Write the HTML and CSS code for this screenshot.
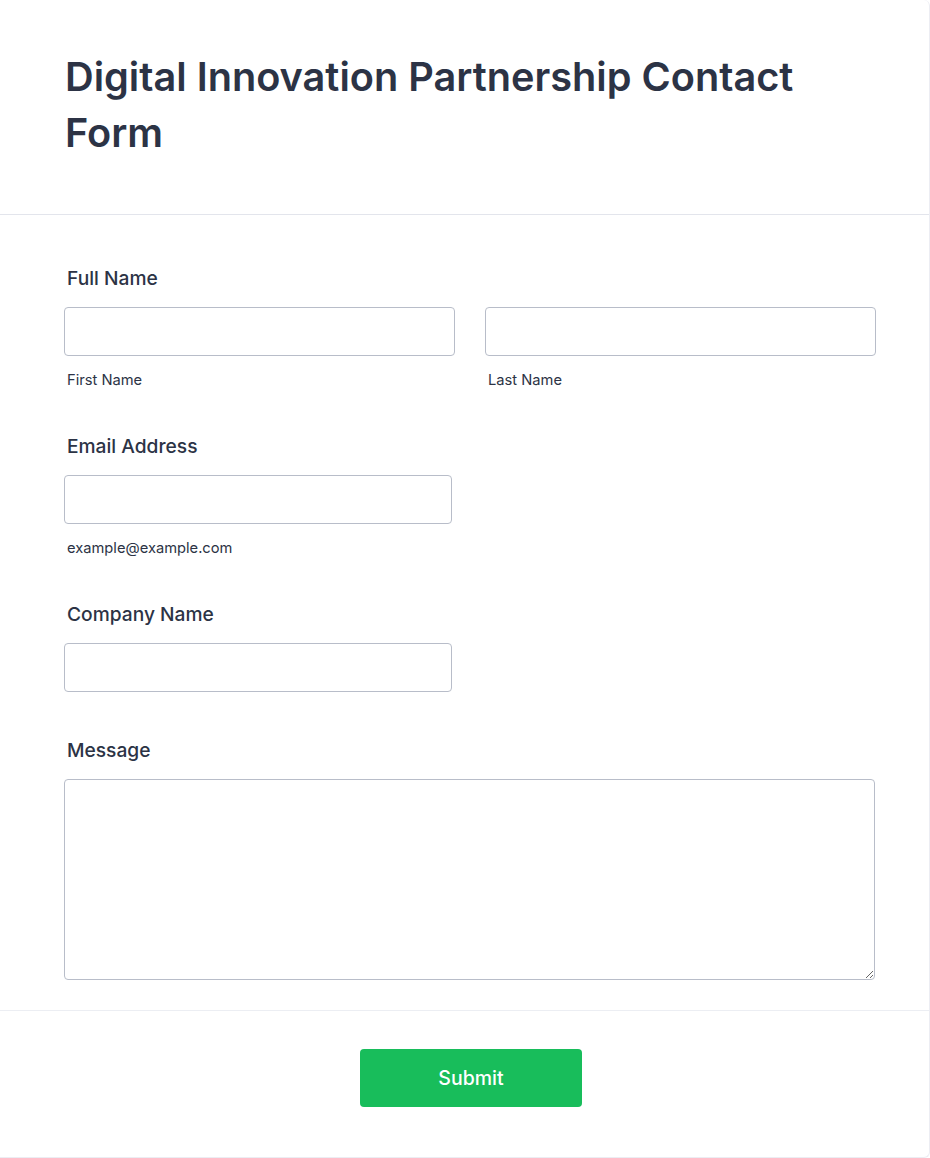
FILE: index.html
```html
<!DOCTYPE html>
<html lang="en">
<head>
<meta charset="utf-8">
<title>Digital Innovation Partnership Contact Form</title>
<link rel="stylesheet" href="styles.css">
</head>
<body>
<form class="card">
  <header class="header">
    <h1 class="title">Digital Innovation Partnership Contact Form</h1>
  </header>
  <div class="body">
    <div class="field">
      <label class="label">Full Name</label>
      <div class="row">
        <div class="col">
          <input class="input" type="text">
          <span class="sub">First Name</span>
        </div>
        <div class="col">
          <input class="input" type="text">
          <span class="sub">Last Name</span>
        </div>
      </div>
    </div>
    <div class="field">
      <label class="label">Email Address</label>
      <div class="half">
        <input class="input" type="email">
        <span class="sub">example@example.com</span>
      </div>
    </div>
    <div class="field field-nosub">
      <label class="label">Company Name</label>
      <div class="half">
        <input class="input" type="text">
      </div>
    </div>
    <div class="field field-last">
      <label class="label">Message</label>
      <textarea class="textarea"></textarea>
    </div>
  </div>
  <footer class="footer">
    <button class="submit" type="button">Submit</button>
  </footer>
</form>
</body>
</html>
```
FILE: styles.css
```css
* { box-sizing: border-box; }
html, body { margin: 0; padding: 0; background: #ffffff; }
body {
  font-family: Inter, "Noto Sans", "Liberation Sans", sans-serif;
  color: #2c3345;
}
.card {
  width: 930px;
  height: 1158px;
  background: #ffffff;
  border-right: 1px solid #ecedf3;
  border-bottom: 1px solid #ecedf3;
  border-bottom-right-radius: 6px;
  border-top-right-radius: 6px;
  display: flex;
  flex-direction: column;
}
.header {
  padding: 49px 40px 53px 65px;
  border-bottom: 1px solid #e3e5ec;
}
.title {
  margin: 0;
  font-size: 39.7px;
  line-height: 56px;
  font-weight: 600;
  color: #2c3345;
}
.body {
  padding: 51px 54px 30px 64px;
  border-bottom: 1px solid #eceef3;
}
.field { display: flex; flex-direction: column; margin-bottom: 45px; }
.field-nosub { margin-bottom: 46px; }
.field-last { margin-bottom: 0; }
.label {
  font-size: 19.2px;
  line-height: 24px;
  font-weight: 500;
  margin: 0 0 17px 3px;
  color: #2c3345;
}
.row { display: flex; gap: 30px; }
.col { flex: 0 0 391px; display: flex; flex-direction: column; }
.half { width: 388px; display: flex; flex-direction: column; }
.input {
  display: block;
  width: 100%;
  height: 49px;
  border: 1px solid #b8bdc9;
  border-radius: 4px;
  background: #ffffff;
  padding: 0 10px;
  font: inherit;
  outline: none;
}
.sub {
  margin: 15px 0 0 3px;
  font-size: 14.7px;
  line-height: 18px;
  color: #2c3345;
}
.textarea {
  display: block;
  width: 811px;
  height: 201px;
  border: 1px solid #b8bdc9;
  border-radius: 4px;
  background: #ffffff;
  font: inherit;
  padding: 8px 10px;
  resize: vertical;
  outline: none;
}
.footer {
  display: flex;
  justify-content: center;
  padding: 38px 0 0 0;
}
.submit {
  width: 222px;
  height: 58px;
  margin-left: 13px;
  border: none;
  border-radius: 4px;
  background: #18bd5b;
  color: #ffffff;
  font-family: Inter, "Noto Sans", "Liberation Sans", sans-serif;
  font-size: 19.5px;
  font-weight: 500;
  cursor: pointer;
}
```
